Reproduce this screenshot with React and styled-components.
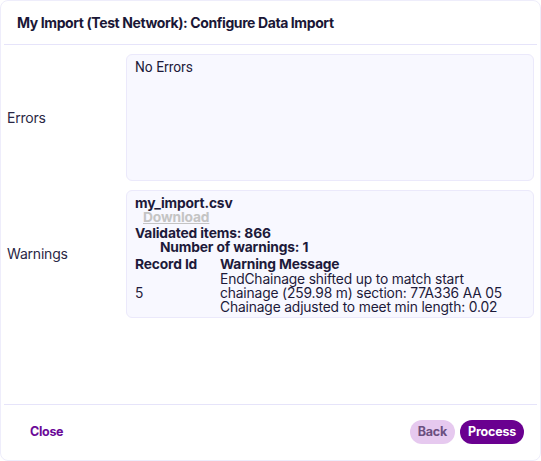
import React from "react";
import styled, { createGlobalStyle } from "styled-components";

const GlobalStyle = createGlobalStyle`
  html, body {
    margin: 0;
    padding: 0;
    background: #ffffff;
  }
  body {
    font-family: Inter, "Liberation Sans", sans-serif;
    color: #1d1a3a;
  }
`;

const Modal = styled.div`
  box-sizing: border-box;
  width: 541px;
  height: 461px;
  border: 1px solid #eeedfb;
  border-radius: 8px;
  background: #ffffff;
  display: flex;
  flex-direction: column;
  padding: 0 3px;
`;

const Header = styled.div`
  height: 43px;
  display: flex;
  align-items: center;
  padding-left: 13px;
  border-bottom: 1px solid #e6e4fa;
`;

const Title = styled.h2`
  margin: 0;
  font-size: 14px;
  font-weight: 700;
  letter-spacing: -0.4px;
  color: #1a1736;
`;

const Body = styled.div`
  flex: 1;
  display: flex;
  flex-direction: column;
  gap: 9px;
  padding: 9px 3px 0 3px;
`;

const Row = styled.div`
  display: grid;
  grid-template-columns: 119px 1fr;
  align-items: center;
`;

const Label = styled.div`
  font-size: 14px;
  letter-spacing: -0.2px;
  color: #2a2745;
  margin-top: -1px;
`;

const Panel = styled.div`
  box-sizing: border-box;
  height: ${(p) => p.$h}px;
  background: #f8f8ff;
  border: 1px solid #ebe9fb;
  border-radius: 6px;
  padding: ${(p) => p.$pad};
  font-size: 13.8px;
  line-height: 14px;
  color: #1d1a3a;
  letter-spacing: -0.15px;
`;

const PlainText = styled.div`
  font-family: Roboto, "Liberation Sans", sans-serif;
  letter-spacing: 0;
  line-height: 16px;
  margin-top: -1px;
`;

const Bold = styled.div`
  font-weight: 700;
  padding-left: ${(p) => p.$indent || 0}px;
  margin-top: ${(p) => p.$top || 0}px;
`;

const DownloadLink = styled.a`
  display: block;
  margin-left: 8px;
  font-weight: 700;
  color: #c4c4c4;
  text-decoration: underline;
  cursor: pointer;
`;

const Table = styled.div`
  display: grid;
  grid-template-columns: 85px 1fr;
  margin-top: 3px;
  align-items: center;
`;

const HeadCell = styled.div`
  font-weight: 700;
  padding-bottom: 1px;
`;

const Cell = styled.div``;

const Footer = styled.div`
  box-sizing: border-box;
  height: 56px;
  border-top: 1px solid #e6e4fa;
  display: flex;
  align-items: center;
  justify-content: space-between;
  padding: 0 13px 2px 26px;
`;

const LinkButton = styled.button`
  background: none;
  border: none;
  padding: 0;
  font-family: Inter, "Liberation Sans", sans-serif;
  font-size: 12.5px;
  font-weight: 700;
  color: #6b0a98;
  letter-spacing: -0.3px;
  cursor: pointer;
`;

const Actions = styled.div`
  display: flex;
  gap: 5px;
`;

const Pill = styled.button`
  height: 24px;
  padding: 0 8px;
  border: none;
  border-radius: 12px;
  font-family: Inter, "Liberation Sans", sans-serif;
  font-size: 12.5px;
  font-weight: 700;
  letter-spacing: -0.2px;
  background: ${(p) => (p.$primary ? "#6a0090" : "#e6c9ef")};
  color: ${(p) => (p.$primary ? "#ffffff" : "#6b4f80")};
  cursor: pointer;
`;

export default function App() {
  return (
    <>
      <GlobalStyle />
      <Modal>
        <Header>
          <Title>My Import (Test Network): Configure Data Import</Title>
        </Header>
        <Body>
          <Row>
            <Label>Errors</Label>
            <Panel $h={127} $pad="5px 8px">
              <PlainText>No Errors</PlainText>
            </Panel>
          </Row>
          <Row>
            <Label>Warnings</Label>
            <Panel $h={128} $pad="5px 8px">
              <Bold>my_import.csv</Bold>
              <DownloadLink>Download</DownloadLink>
              <Bold $top={2}>Validated items: 866</Bold>
              <Bold $indent={25}>Number of warnings: 1</Bold>
              <Table>
                <HeadCell>Record Id</HeadCell>
                <HeadCell>Warning Message</HeadCell>
                <Cell>5</Cell>
                <Cell>
                  EndChainage shifted up to match start
                  <br />
                  chainage (259.98 m) section: 77A336 AA 05
                  <br />
                  Chainage adjusted to meet min length: 0.02
                </Cell>
              </Table>
            </Panel>
          </Row>
        </Body>
        <Footer>
          <LinkButton>Close</LinkButton>
          <Actions>
            <Pill>Back</Pill>
            <Pill $primary>Process</Pill>
          </Actions>
        </Footer>
      </Modal>
    </>
  );
}
